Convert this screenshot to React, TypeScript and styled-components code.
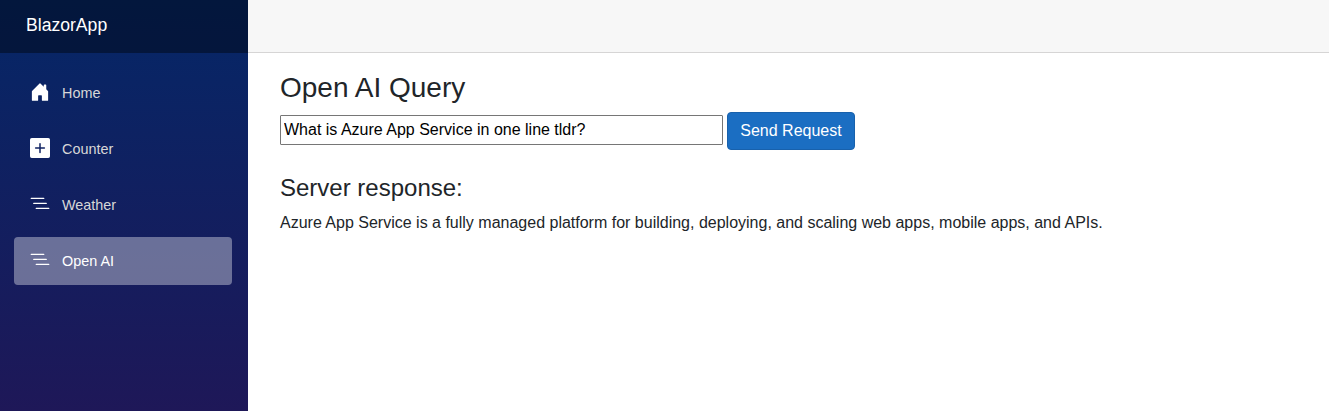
import React from 'react';
import styled, { createGlobalStyle } from 'styled-components';

const GlobalStyle = createGlobalStyle`
  *, *::before, *::after { box-sizing: border-box; }
  html, body { margin: 0; overflow: hidden; }
  body {
    font-family: "Helvetica Neue", "Liberation Sans", Arial, sans-serif;
    font-size: 16px;
    line-height: 1.5;
    color: #212529;
    background: #fff;
  }
`;

const Page = styled.div`
  display: flex;
  height: 411px;
`;

const Sidebar = styled.div`
  width: 248px;
  flex: none;
  background: linear-gradient(180deg, rgb(5, 39, 103) 0, #3a0647 870px);
`;

const Brand = styled.div`
  height: 53px;
  padding: 12px 0 0 26px;
  background: rgba(0, 0, 0, 0.4);
  color: #fff;
  font-size: 17.6px;
  line-height: 27px;
`;

const Nav = styled.nav`
  display: flex;
  flex-direction: column;
  gap: 8px;
  padding: 16px 16px 0 14px;
`;

const NavLink = styled.a<{ $active?: boolean }>`
  display: flex;
  align-items: center;
  height: 48px;
  padding-left: 16px;
  border-radius: 4px;
  font-size: 14.4px;
  line-height: 48px;
  color: ${(p) => (p.$active ? '#fff' : '#d7d7d7')};
  background: ${(p) => (p.$active ? 'rgba(255, 255, 255, 0.37)' : 'transparent')};
`;

const Icon = styled.svg`
  width: 20px;
  height: 20px;
  margin: -2px 12px 0 0;
  fill: #fff;
`;

const Main = styled.main`
  flex: 1;
`;

const TopRow = styled.div`
  height: 53px;
  background: #f7f7f7;
  border-bottom: 1px solid #d6d5d5;
`;

const Content = styled.article`
  padding: 18px 24px 0 32px;
`;

const Title = styled.h3`
  margin: 0 0 7px;
  font-size: 28px;
  font-weight: 400;
  line-height: 34px;
`;

const QueryRow = styled.div`
  display: flex;
  align-items: flex-start;
  gap: 4px;
`;

const QueryInput = styled.input`
  width: 443px;
  height: 30px;
  margin: 3px 0 0;
  padding: 1px 3px;
  border: 1px solid #767676;
  border-radius: 1px;
  font: inherit;
  color: #000;
`;

const SendButton = styled.button`
  width: 128px;
  height: 38px;
  padding: 0;
  border: 1px solid #1861ac;
  border-radius: 4px;
  background: #1b6ec2;
  color: #fff;
  font: inherit;
`;

const Subtitle = styled.h4`
  margin: 23px 0 9px;
  font-size: 24px;
  font-weight: 400;
  line-height: 29px;
`;

const Response = styled.p`
  margin: 0;
`;

const HomeIcon = () => (
  <Icon viewBox="0 0 16 16">
    <path d="M6.5 14.5v-3.505c0-.245.25-.495.5-.495h2c.25 0 .5.25.5.5v3.5a.5.5 0 0 0 .5.5h4a.5.5 0 0 0 .5-.5v-7a.5.5 0 0 0-.146-.354L13 5.793V2.5a.5.5 0 0 0-.5-.5h-1a.5.5 0 0 0-.5.5v1.293L8.354 1.146a.5.5 0 0 0-.708 0l-6 6A.5.5 0 0 0 1.5 7.5v7a.5.5 0 0 0 .5.5h4a.5.5 0 0 0 .5-.5Z" />
  </Icon>
);

const PlusIcon = () => (
  <Icon viewBox="0 0 16 16">
    <path d="M1.4 0A1.4 1.4 0 0 0 0 1.4v13.2A1.4 1.4 0 0 0 1.4 16h13.2a1.4 1.4 0 0 0 1.4-1.4V1.4A1.4 1.4 0 0 0 14.6 0H1.4zm7.2 4.5v2.9h2.9a.6.6 0 0 1 0 1.2H8.600v2.9a.6.6 0 0 1-1.200 0V8.600H4.500a.6.6 0 0 1 0-1.200h2.900V4.500a.6.6 0 0 1 1.200 0z" />
  </Icon>
);

const ListIcon = () => (
  <Icon viewBox="0 0 16 16">
    <path fillRule="evenodd" d="M4.5 11.5A.5.5 0 0 1 5 11h10a.5.5 0 0 1 0 1H5a.5.5 0 0 1-.5-.5zm-2-4A.5.5 0 0 1 3 7h10a.5.5 0 0 1 0 1H3a.5.5 0 0 1-.5-.5zm-2-4A.5.5 0 0 1 1 3h10a.5.5 0 0 1 0 1H1a.5.5 0 0 1-.5-.5z" />
  </Icon>
);

export default function App() {
  return (
    <>
      <GlobalStyle />
      <Page>
        <Sidebar>
          <Brand>BlazorApp</Brand>
          <Nav>
            <NavLink><HomeIcon />Home</NavLink>
            <NavLink><PlusIcon />Counter</NavLink>
            <NavLink><ListIcon />Weather</NavLink>
            <NavLink $active><ListIcon />Open AI</NavLink>
          </Nav>
        </Sidebar>
        <Main>
          <TopRow />
          <Content>
            <Title>Open AI Query</Title>
            <QueryRow>
              <QueryInput defaultValue="What is Azure App Service in one line tldr?" />
              <SendButton>Send Request</SendButton>
            </QueryRow>
            <Subtitle>Server response:</Subtitle>
            <Response>
              Azure App Service is a fully managed platform for building, deploying, and scaling web apps, mobile apps, and APIs.
            </Response>
          </Content>
        </Main>
      </Page>
    </>
  );
}
